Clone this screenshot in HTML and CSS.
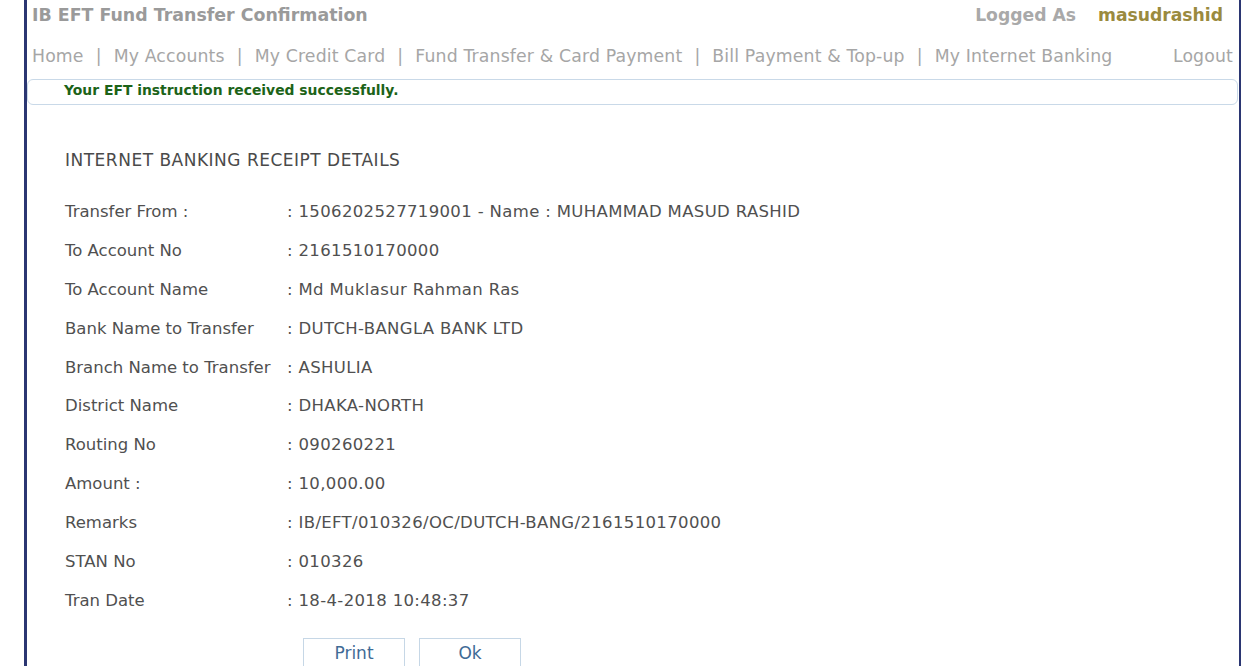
FILE: index.html
```html
<!DOCTYPE html>
<html>
<head>
<meta charset="utf-8">
<link rel="stylesheet" href="styles.css">
</head>
<body>
<div class="page">
  <div class="topbar">
    <div class="title">IB EFT Fund Transfer Confirmation</div>
    <div class="logged"><span class="logged-label">Logged As</span><span class="user">masudrashid</span></div>
  </div>
  <div class="nav">
    <div class="nav-links">
      <a>Home</a><span class="sep">|</span>
      <a>My Accounts</a><span class="sep">|</span>
      <a>My Credit Card</a><span class="sep">|</span>
      <a>Fund Transfer &amp; Card Payment</a><span class="sep">|</span>
      <a>Bill Payment &amp; Top-up</a><span class="sep">|</span>
      <a>My Internet Banking</a>
    </div>
    <a class="logout">Logout</a>
  </div>
  <div class="msg">Your EFT instruction received successfully.</div>
  <div class="receipt">
    <h2 class="heading">INTERNET BANKING RECEIPT DETAILS</h2>
    <div class="rows">
      <div class="label">Transfer From :</div><div class="value">: 1506202527719001 - Name : MUHAMMAD MASUD RASHID</div>
      <div class="label">To Account No</div><div class="value">: 2161510170000</div>
      <div class="label">To Account Name</div><div class="value">: Md Muklasur Rahman Ras</div>
      <div class="label">Bank Name to Transfer</div><div class="value">: DUTCH-BANGLA BANK LTD</div>
      <div class="label">Branch Name to Transfer</div><div class="value">: ASHULIA</div>
      <div class="label">District Name</div><div class="value">: DHAKA-NORTH</div>
      <div class="label">Routing No</div><div class="value">: 090260221</div>
      <div class="label">Amount :</div><div class="value">: 10,000.00</div>
      <div class="label">Remarks</div><div class="value">: IB/EFT/010326/OC/DUTCH-BANG/2161510170000</div>
      <div class="label">STAN No</div><div class="value">: 010326</div>
      <div class="label">Tran Date</div><div class="value">: 18-4-2018 10:48:37</div>
    </div>
    <div class="buttons">
      <button class="btn">Print</button>
      <button class="btn">Ok</button>
    </div>
  </div>
</div>
</body>
</html>
```

FILE: styles.css
```css
html, body {
  margin: 0;
  padding: 0;
  background: #ffffff;
}
body {
  font-family: "DejaVu Sans", Verdana, sans-serif;
}
.page {
  margin-left: 24px;
  width: 1212px;
  min-height: 666px;
  border-left: 3px solid #2b3672;
  border-right: 2px solid #2b3672;
  box-sizing: content-box;
}
.topbar {
  display: flex;
  justify-content: space-between;
  align-items: center;
  height: 29px;
  padding: 0 16px 0 5px;
}
.title {
  font-weight: bold;
  font-size: 17.4px;
  color: #9a9a9a;
}
.logged {
  font-weight: bold;
  font-size: 17.2px;
  display: flex;
  gap: 22px;
}
.logged-label { color: #a9a9a9; }
.user { color: #9a8a3e; }
.nav {
  display: flex;
  justify-content: space-between;
  align-items: center;
  height: 47px;
  padding: 3px 6px 0 5px;
  font-size: 17.3px;
  letter-spacing: 0.15px;
  color: #a6a6a6;
}
.nav-links {
  display: flex;
  gap: 12px;
}
.nav a { color: #a6a6a6; }
.msg {
  margin: 0 1px 0 0;
  height: 24px;
  border: 1px solid #c9d9e8;
  border-radius: 6px;
  padding-left: 36px;
  font-weight: bold;
  font-size: 13.9px;
  color: #1c6318;
  line-height: 20px;
}
.receipt {
  padding-left: 38px;
  color: #505050;
  font-family: "DejaVu Sans", sans-serif;
}
.heading {
  margin: 42px 0 0 0;
  font-weight: normal;
  font-size: 17px;
  letter-spacing: 0.5px;
  color: #4a4a4a;
  height: 26px;
  line-height: 26px;
}
.rows {
  margin-top: 19px;
  display: grid;
  grid-template-columns: 222px auto;
  grid-auto-rows: 38.9px;
  align-items: center;
  font-size: 16.5px;
}
.value {
  letter-spacing: 0.35px;
}
.buttons {
  margin-top: 18px;
  padding-left: 238px;
  display: flex;
  gap: 14px;
}
.btn {
  width: 102px;
  height: 30px;
  background: #ffffff;
  border: 1px solid #c6d7e6;
  color: #3f6b96;
  font-family: "DejaVu Sans", sans-serif;
  font-size: 17px;
  padding: 0;
  line-height: 26px;
  text-align: center;
  vertical-align: top;
}
```
